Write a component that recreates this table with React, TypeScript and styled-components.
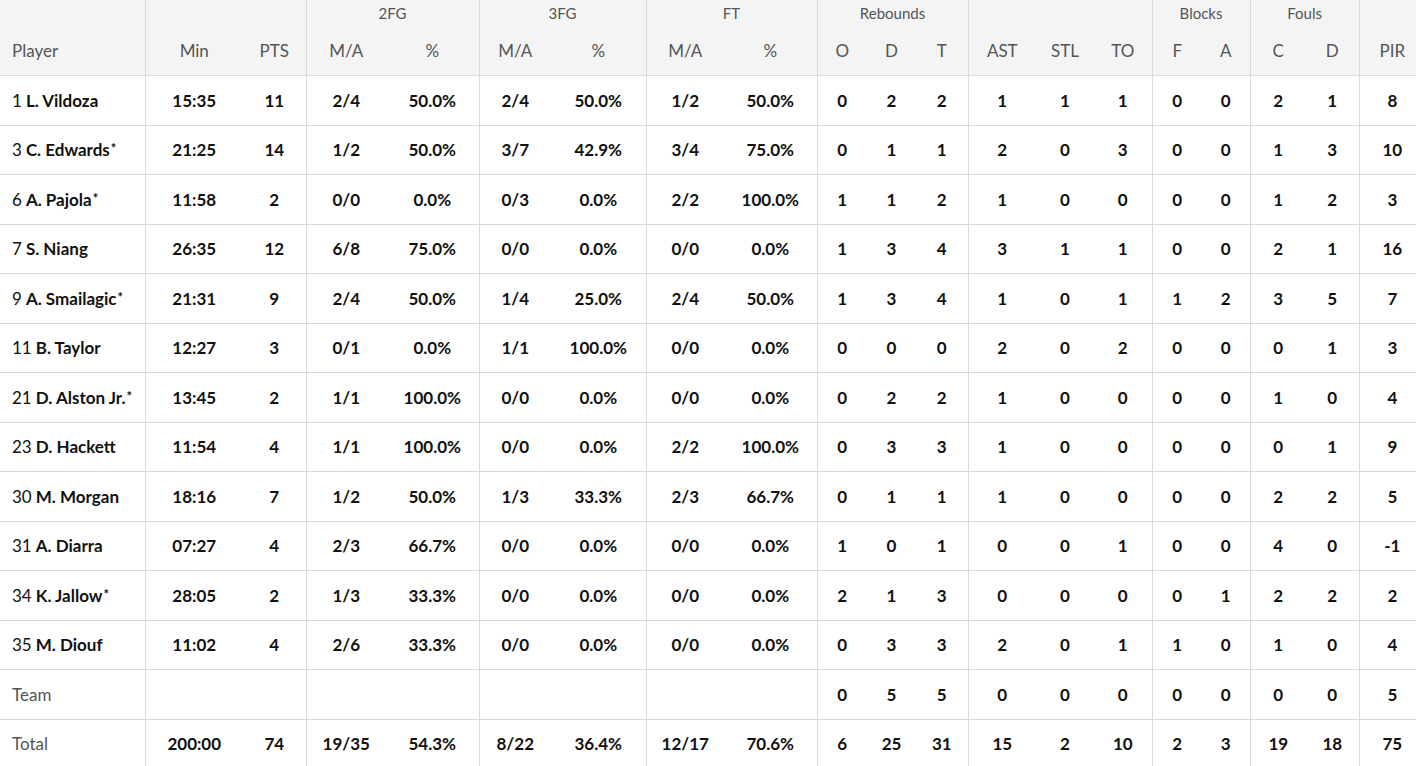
import React from "react";
import styled, { createGlobalStyle } from "styled-components";

const GlobalStyle = createGlobalStyle`
	html, body {
		margin: 0;
		padding: 0;
		background: #fff;
		overflow: hidden;
	}
	body {
		font-family: Lato, "Open Sans", "Liberation Sans", sans-serif;
		color: #111;
	}
`;

type Player = {
	no: number;
	name: string;
	starter?: boolean;
	stats: (string | number)[];
};

// Min, PTS, 2FG m/a, %, 3FG m/a, %, FT m/a, %, O, D, T, AST, STL, TO, F, A, C, D, PIR
const players: Player[] = [
	{ no: 1, name: "L. Vildoza", stats: ["15:35", 11, "2/4", "50.0%", "2/4", "50.0%", "1/2", "50.0%", 0, 2, 2, 1, 1, 1, 0, 0, 2, 1, 8] },
	{ no: 3, name: "C. Edwards", starter: true, stats: ["21:25", 14, "1/2", "50.0%", "3/7", "42.9%", "3/4", "75.0%", 0, 1, 1, 2, 0, 3, 0, 0, 1, 3, 10] },
	{ no: 6, name: "A. Pajola", starter: true, stats: ["11:58", 2, "0/0", "0.0%", "0/3", "0.0%", "2/2", "100.0%", 1, 1, 2, 1, 0, 0, 0, 0, 1, 2, 3] },
	{ no: 7, name: "S. Niang", stats: ["26:35", 12, "6/8", "75.0%", "0/0", "0.0%", "0/0", "0.0%", 1, 3, 4, 3, 1, 1, 0, 0, 2, 1, 16] },
	{ no: 9, name: "A. Smailagic", starter: true, stats: ["21:31", 9, "2/4", "50.0%", "1/4", "25.0%", "2/4", "50.0%", 1, 3, 4, 1, 0, 1, 1, 2, 3, 5, 7] },
	{ no: 11, name: "B. Taylor", stats: ["12:27", 3, "0/1", "0.0%", "1/1", "100.0%", "0/0", "0.0%", 0, 0, 0, 2, 0, 2, 0, 0, 0, 1, 3] },
	{ no: 21, name: "D. Alston Jr.", starter: true, stats: ["13:45", 2, "1/1", "100.0%", "0/0", "0.0%", "0/0", "0.0%", 0, 2, 2, 1, 0, 0, 0, 0, 1, 0, 4] },
	{ no: 23, name: "D. Hackett", stats: ["11:54", 4, "1/1", "100.0%", "0/0", "0.0%", "2/2", "100.0%", 0, 3, 3, 1, 0, 0, 0, 0, 0, 1, 9] },
	{ no: 30, name: "M. Morgan", stats: ["18:16", 7, "1/2", "50.0%", "1/3", "33.3%", "2/3", "66.7%", 0, 1, 1, 1, 0, 0, 0, 0, 2, 2, 5] },
	{ no: 31, name: "A. Diarra", stats: ["07:27", 4, "2/3", "66.7%", "0/0", "0.0%", "0/0", "0.0%", 1, 0, 1, 0, 0, 1, 0, 0, 4, 0, -1] },
	{ no: 34, name: "K. Jallow", starter: true, stats: ["28:05", 2, "1/3", "33.3%", "0/0", "0.0%", "0/0", "0.0%", 2, 1, 3, 0, 0, 0, 0, 1, 2, 2, 2] },
	{ no: 35, name: "M. Diouf", stats: ["11:02", 4, "2/6", "33.3%", "0/0", "0.0%", "0/0", "0.0%", 0, 3, 3, 2, 0, 1, 1, 0, 1, 0, 4] },
];

const team = ["", "", "", "", "", "", "", "", 0, 5, 5, 0, 0, 0, 0, 0, 0, 0, 5];
const total = ["200:00", 74, "19/35", "54.3%", "8/22", "36.4%", "12/17", "70.6%", 6, 25, 31, 15, 2, 10, 2, 3, 19, 18, 75];

const columns = ["Min", "PTS", "M/A", "%", "M/A", "%", "M/A", "%", "O", "D", "T", "AST", "STL", "TO", "F", "A", "C", "D", "PIR"];
const widths = [145, 98, 63, 80, 93, 72, 95, 78, 93, 50, 49, 52, 68, 58, 58, 50, 48, 56, 53, 66];
// index of the stat columns that close a group (vertical rule on their right)
const groupEnds = new Set([1, 3, 5, 7, 10, 13, 15, 17]);

const groups: { label: string; span: number }[] = [
	{ label: "", span: 2 },
	{ label: "2FG", span: 2 },
	{ label: "3FG", span: 2 },
	{ label: "FT", span: 2 },
	{ label: "Rebounds", span: 3 },
	{ label: "", span: 3 },
	{ label: "Blocks", span: 2 },
	{ label: "Fouls", span: 2 },
	{ label: "", span: 1 },
];

const Table = styled.table`
	table-layout: fixed;
	border-collapse: collapse;
	width: 1425px;
	font-size: 17px;
`;

const Head = styled.thead`
	background: #f4f4f4;
	color: #555;
`;

const GroupTh = styled.th<{ $rule?: boolean }>`
	height: 26px;
	padding: 0;
	vertical-align: middle;
	font-size: 15px;
	font-weight: 400;
	text-align: center;
	line-height: 18px;
	border-right: ${p => (p.$rule ? "1px solid #dadada" : "none")};
`;

const ColTh = styled.th<{ $rule?: boolean; $left?: boolean }>`
	height: 49px;
	padding: 0 ${p => (p.$left ? "12px" : "0")};
	font-size: 17px;
	font-weight: 400;
	text-align: ${p => (p.$left ? "left" : "center")};
	border-right: ${p => (p.$rule ? "1px solid #dadada" : "none")};
	border-bottom: 1px solid #dadada;
	vertical-align: middle;
`;

const Row = styled.tr`
	height: 49.5px;
	border-bottom: 1px solid #dadada;
`;

const Cell = styled.td<{ $rule?: boolean }>`
	padding: 0;
	text-align: center;
	font-weight: 700;
	color: #111;
	border-right: ${p => (p.$rule ? "1px solid #dadada" : "none")};
	white-space: nowrap;
`;

const NameCell = styled.td<{ $muted?: boolean }>`
	padding: 0 12px;
	text-align: left;
	white-space: nowrap;
	border-right: 1px solid #dadada;
	font-weight: ${p => (p.$muted ? 400 : 700)};
	color: ${p => (p.$muted ? "#555" : "#111")};
`;

const Num = styled.span`
	font-weight: 400;
	margin-right: 4px;
`;

const Star = styled.sup`
	font-size: 13px;
	font-weight: 700;
	line-height: 0;
	margin-left: 1px;
	vertical-align: 3px;
`;

const StatCells: React.FC<{ values: (string | number)[] }> = ({ values }) => (
	<>
		{values.map((v, i) => (
			<Cell key={i} $rule={groupEnds.has(i)}>{v}</Cell>
		))}
	</>
);

export default function App() {
	return (
		<>
			<GlobalStyle />
			<Table>
				<colgroup>
					{widths.map((w, i) => (
						<col key={i} style={{ width: w }} />
					))}
				</colgroup>
				<Head>
					<tr>
						<GroupTh $rule />
						{groups.map((g, i) => (
							<GroupTh key={i} colSpan={g.span} $rule={i < groups.length - 1}>
								{g.label}
							</GroupTh>
						))}
					</tr>
					<tr>
						<ColTh $left $rule>Player</ColTh>
						{columns.map((c, i) => (
							<ColTh key={i} $rule={groupEnds.has(i)}>{c}</ColTh>
						))}
					</tr>
				</Head>
				<tbody>
					{players.map(p => (
						<Row key={p.no}>
							<NameCell>
								<Num>{p.no}</Num>
								{p.name}
								{p.starter && <Star>*</Star>}
							</NameCell>
							<StatCells values={p.stats} />
						</Row>
					))}
					<Row>
						<NameCell $muted>Team</NameCell>
						<StatCells values={team} />
					</Row>
					<Row>
						<NameCell $muted>Total</NameCell>
						<StatCells values={total} />
					</Row>
				</tbody>
			</Table>
		</>
	);
}
